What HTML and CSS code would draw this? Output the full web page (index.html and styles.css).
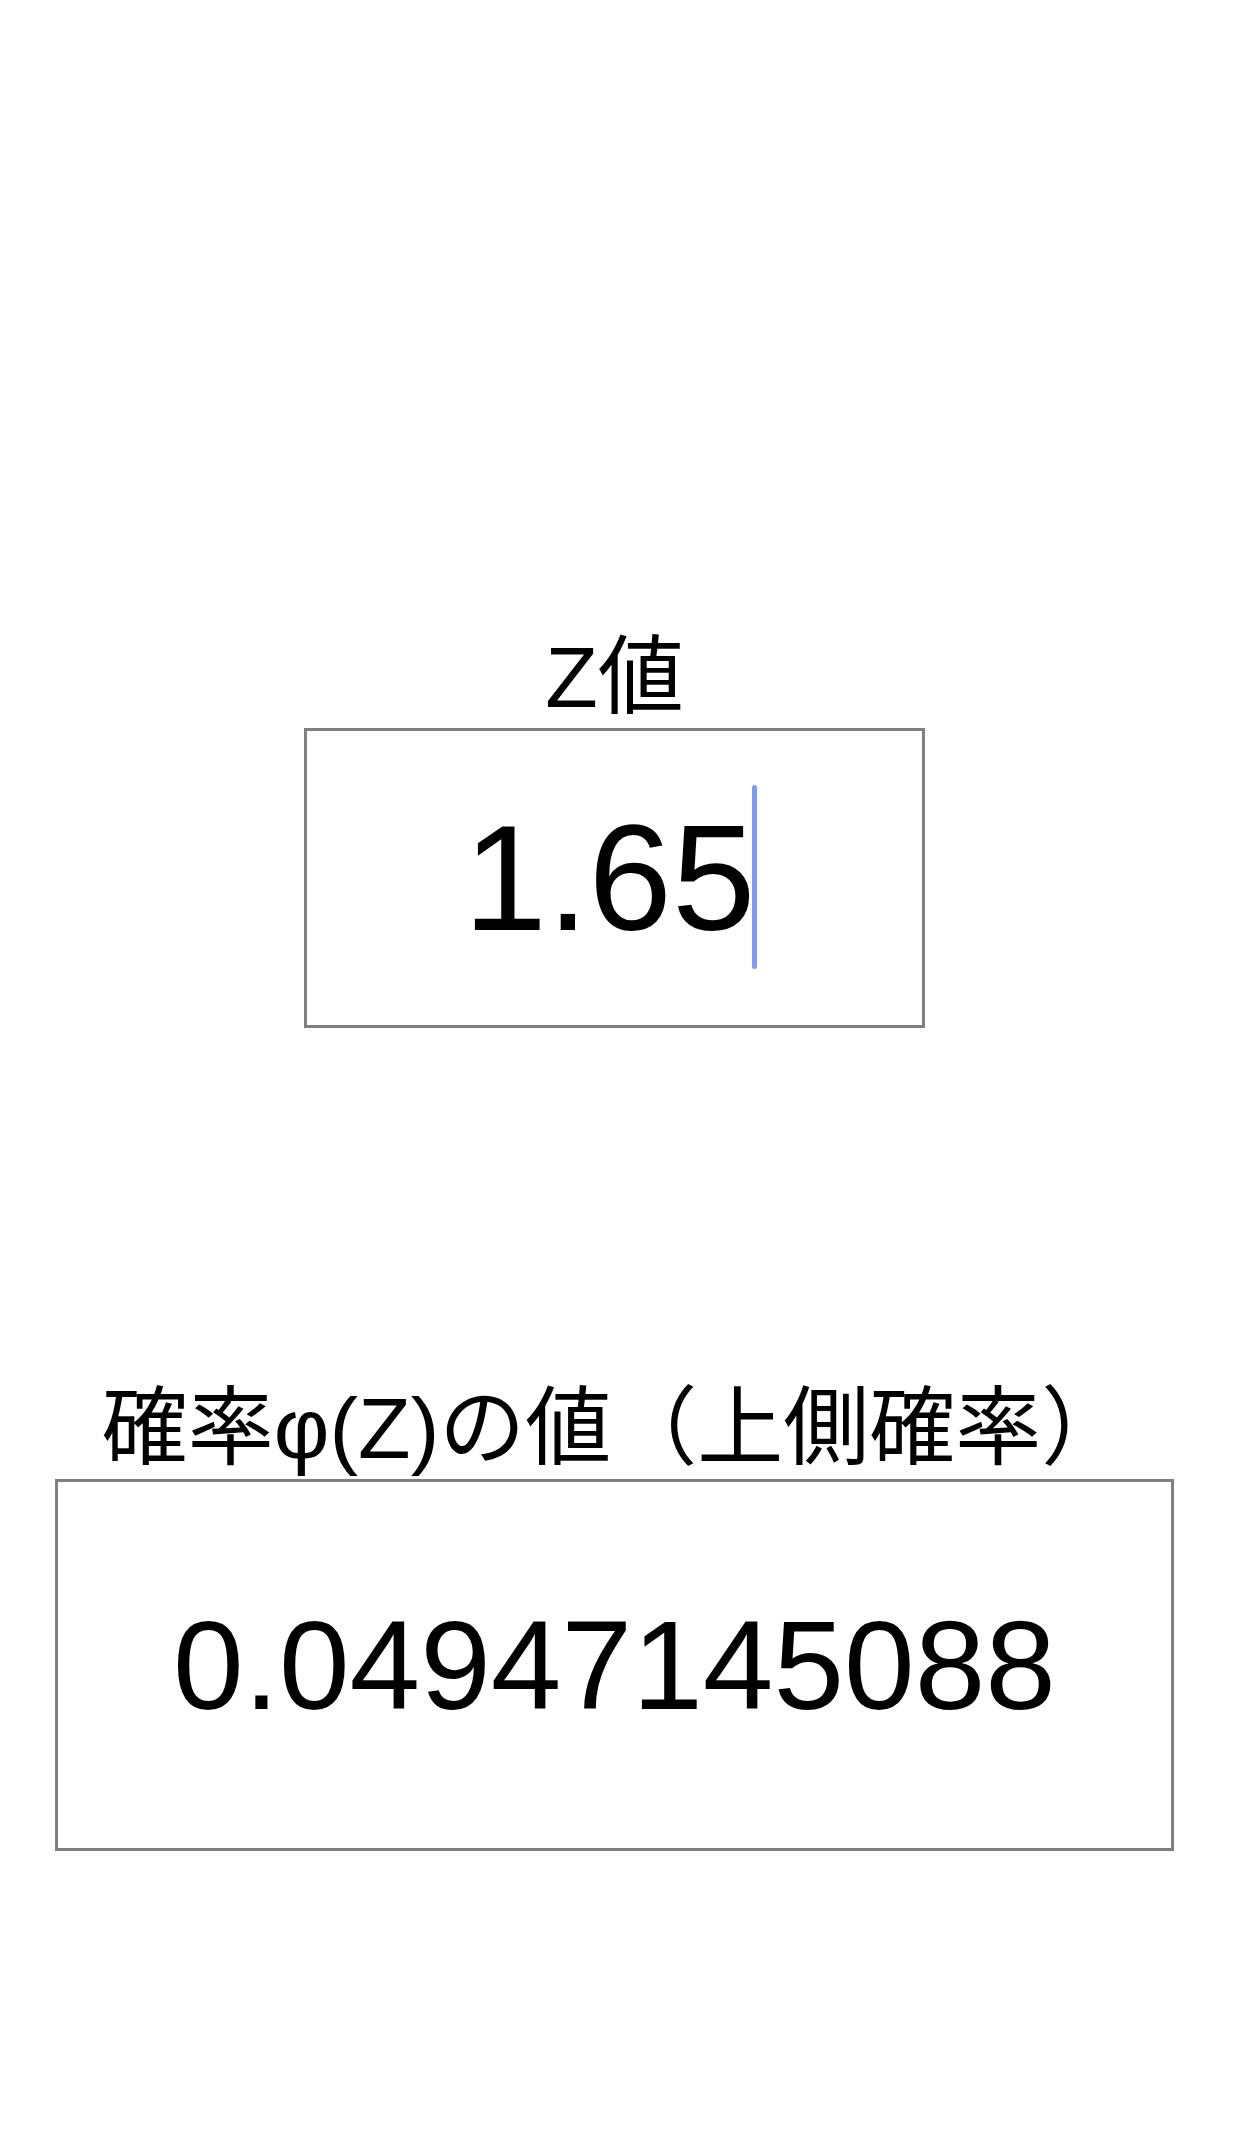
FILE: index.html
```html
<!DOCTYPE html>
<html lang="ja">
<head>
<meta charset="utf-8">
<title>Z値</title>
<link rel="stylesheet" href="styles.css">
</head>
<body>
<main class="page">
  <label class="field-label" for="z">Z値</label>
  <div class="input-box" id="z">
    <span class="input-value">1.65</span><span class="caret"></span>
  </div>
  <div class="field-label result-label">確率φ(Z)の値（上側確率）</div>
  <div class="output-box">
    <span class="output-value">0.0494714508<span>8</span></span>
  </div>
</main>
</body>
</html>
```

FILE: styles.css
```css
html, body {
  margin: 0;
  padding: 0;
  background: #ffffff;
}

body {
  font-family: "Liberation Sans", "Noto Sans CJK JP", sans-serif;
  color: #000000;
}

.page {
  width: 1229px;
  padding-top: 627px;
  display: flex;
  flex-direction: column;
  align-items: center;
}

.field-label {
  display: block;
  font-size: 86px;
  line-height: 100px;
  height: 100px;
  margin-bottom: 1px;
  white-space: nowrap;
  text-align: center;
}

.input-box {
  box-sizing: border-box;
  width: 621px;
  height: 300px;
  border: 3px solid #808080;
  text-align: center;
  white-space: nowrap;
  font-size: 150px;
  line-height: 294px;
}

.caret {
  display: inline-block;
  width: 5px;
  height: 184px;
  margin-left: -3px;
  margin-right: 8px;
  vertical-align: -39px;
  background: #7f9cf5;
  border-radius: 3px;
}

.result-label {
  margin-top: 350px;
}

.output-box {
  box-sizing: border-box;
  width: 1119px;
  height: 372px;
  border: 3px solid #808080;
  text-align: center;
  white-space: nowrap;
  font-size: 127px;
  line-height: 366px;
}
```
